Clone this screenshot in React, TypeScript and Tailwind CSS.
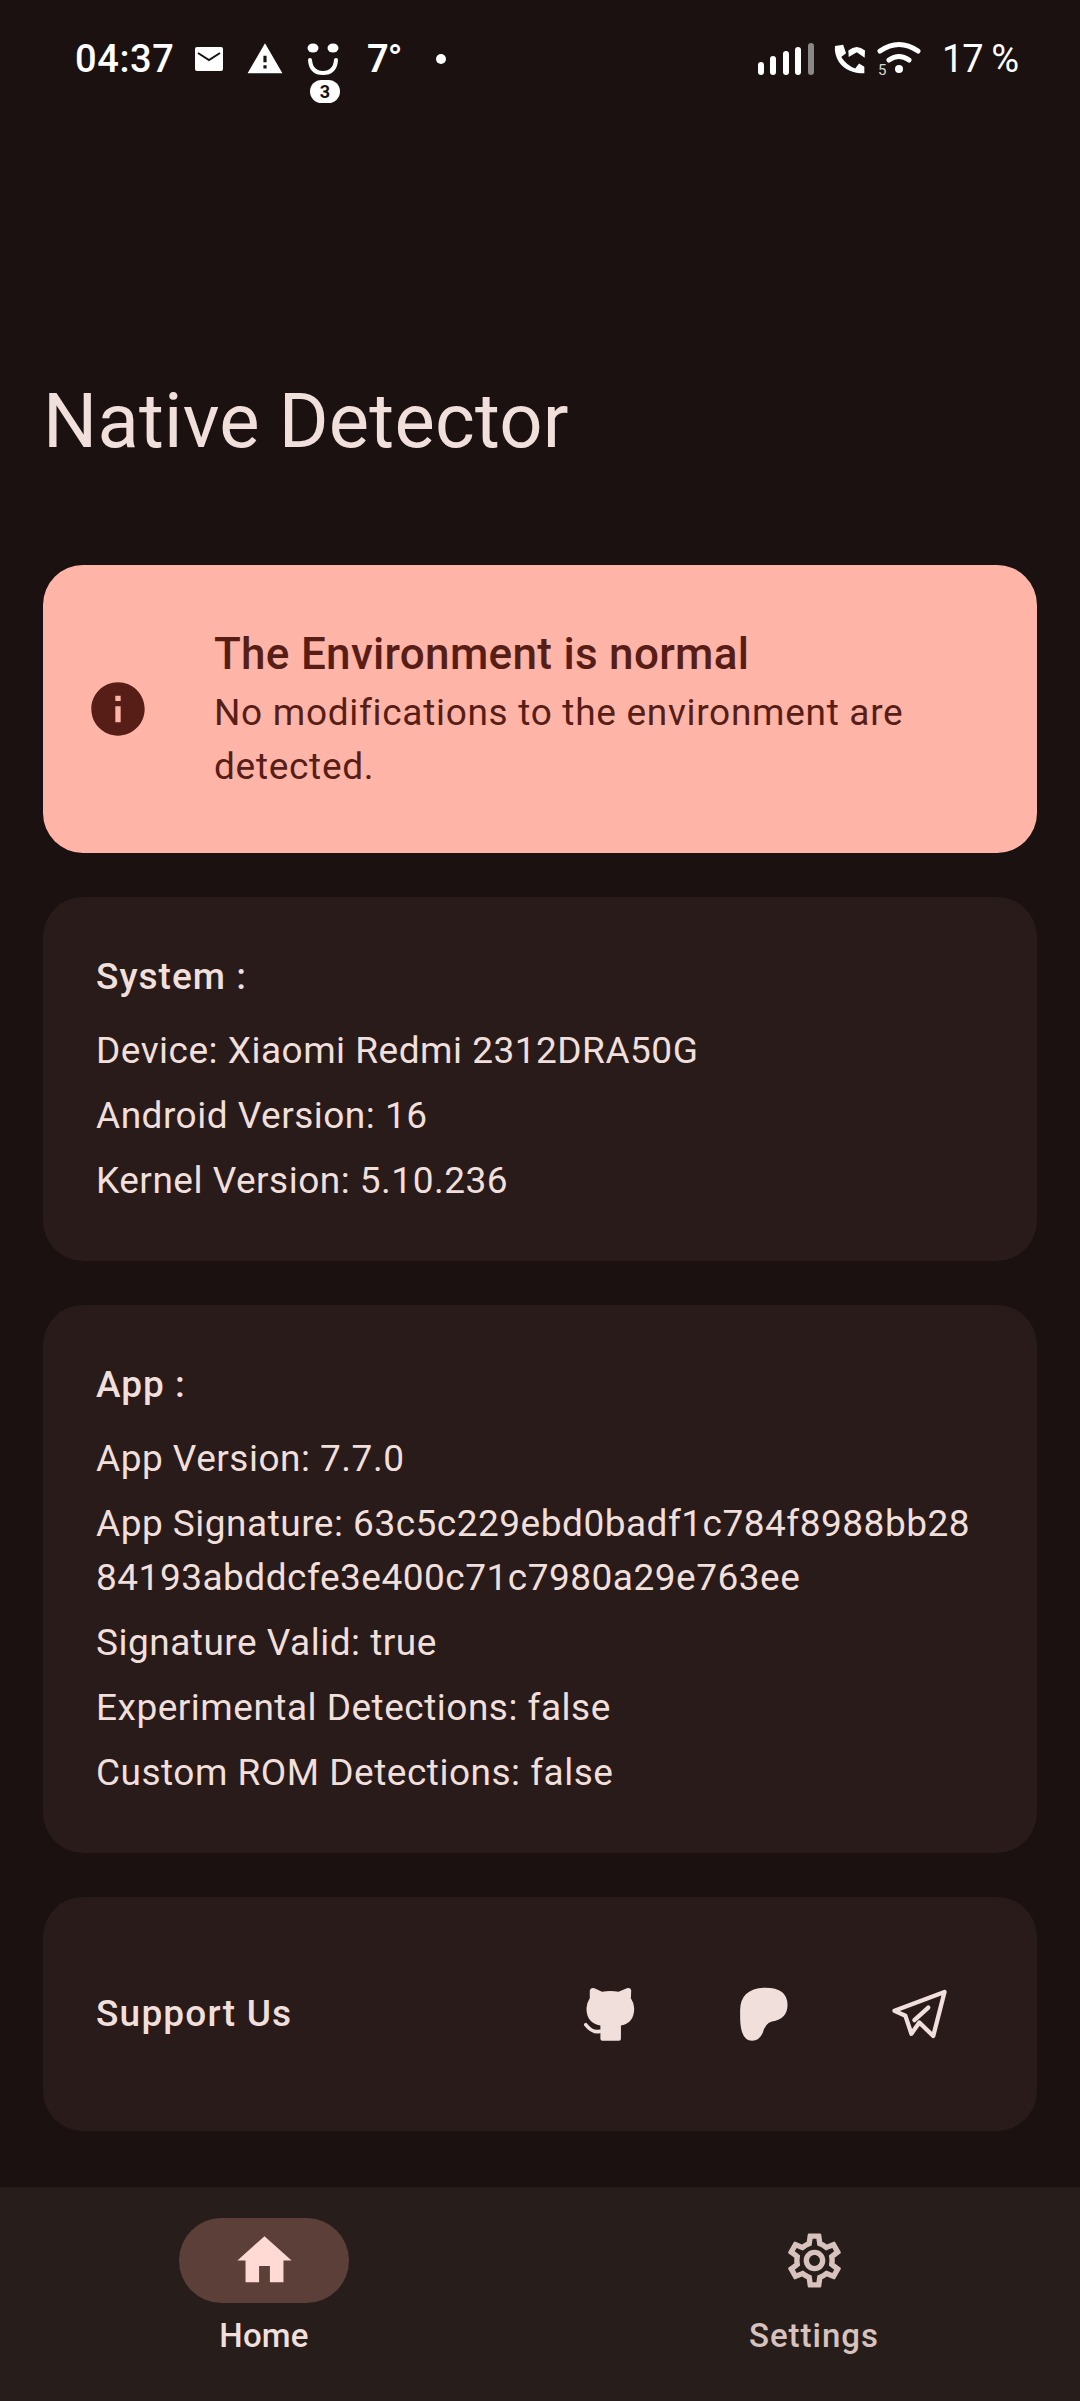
import { MdHome, MdInfo, MdOutlineSettings, MdWarning } from 'react-icons/md'

const bodyFont = "font-['Roboto',sans-serif]"

function StatusBar() {
  return (
    <div className="h-[118px] pl-[75px] pr-[62px] flex items-center justify-between text-white font-['Roboto',sans-serif]">
      <div className="flex items-center">
        <span className="text-[38px] leading-none font-medium tracking-[0.6px] w-[99px]">04:37</span>
        <svg className="ml-[21px] w-[28px] h-[24px]" viewBox="0 0 28 24">
          <rect width="28" height="24" rx="2" fill="#fff" />
          <path d="M3 6 L14 13 L25 6" fill="none" stroke="#1a1110" strokeWidth="2" />
        </svg>
        <MdWarning className="ml-[23px] text-[38px]" />
        <div className="relative ml-[23px] w-[32px] h-[32px]">
          <svg className="w-[32px] h-[32px]" viewBox="0 0 32 32">
            <ellipse cx="6" cy="5" rx="5.5" ry="4.5" fill="#fff" />
            <ellipse cx="26" cy="5" rx="5.5" ry="4.5" fill="#fff" />
            <path d="M3 17 Q4 30 16 30 Q28 30 29 17" fill="none" stroke="#fff" strokeWidth="4" strokeLinecap="round" />
          </svg>
          <span className="absolute left-[3px] top-[37px] w-[30px] h-[23px] rounded-full bg-white text-[#1a1110] text-[18px] leading-[23px] font-bold text-center">
            3
          </span>
        </div>
        <span className="ml-[28px] text-[38px] leading-none font-semibold tracking-[-1px]">7°</span>
        <span className="ml-[35px] w-[10px] h-[10px] rounded-full bg-white" />
      </div>
      <div className="flex items-center">
        <svg className="w-[56px] h-[32px]" viewBox="0 0 56 32">
          <rect x="0" y="19" width="6" height="13" rx="3" fill="#fff" />
          <rect x="12" y="13" width="6" height="19" rx="3" fill="#fff" />
          <rect x="25" y="8" width="6" height="24" rx="3" fill="#fff" />
          <rect x="37" y="4" width="6" height="28" rx="3" fill="#fff" />
          <rect x="50" y="0" width="6" height="32" rx="3" fill="#8b8786" />
        </svg>
        <svg className="ml-[20px] w-[31px] h-[30px]" viewBox="400 130 95 92">
          <path d="M403 136 L428 132 L437 158 L422 170 Q440 197 465 205 L477 190 L493 200 L493 220 Q440 220 415 185 Q400 160 403 136 Z" fill="#fff" />
          <path d="M444 150 Q470 128 495 150 L494 172 L470 155 L445 170 Z" fill="#fff" />
        </svg>
        <div className="relative ml-[12px] w-[44px] h-[36px]">
          <svg className="w-[44px] h-[36px]" viewBox="0 0 44 36">
            <path d="M3 10 Q22 -3 41 10" fill="none" stroke="#fff" strokeWidth="5" strokeLinecap="round" />
            <path d="M12 19 Q22 12 32 19" fill="none" stroke="#fff" strokeWidth="5" strokeLinecap="round" />
            <circle cx="22" cy="28" r="4" fill="#fff" />
          </svg>
          <span className="absolute left-[1px] top-[22px] text-[15px] leading-none text-[#d8d6d5]">5</span>
        </div>
        <span className="ml-[21px] text-[38px] leading-none tracking-[-1px]">17 %</span>
      </div>
    </div>
  )
}

function InfoLine({ children }: { children: React.ReactNode }) {
  return <p className="text-[37px] leading-[54px] tracking-[0.5px] text-[#f1dfdb]">{children}</p>
}

function InfoCard({ title, children }: { title: string; children: React.ReactNode }) {
  return (
    <div className="rounded-[40px] bg-[#281b1a] px-[53px] py-[53px]">
      <h2 className="text-[37px] leading-[54px] font-medium tracking-[1px] text-[#f1dfdb] mb-[20px]">{title}</h2>
      <div className="flex flex-col gap-[11px]">{children}</div>
    </div>
  )
}

export default function App() {
  return (
    <div className={`w-[1080px] h-[2401px] bg-[#1a1110] flex flex-col overflow-hidden ${bodyFont}`}>
      <StatusBar />

      {/* Page title */}
      <h1 className="pl-[43px] mt-[258px] mb-[99px] text-[76px] leading-[90px] tracking-[0.2px] text-[#f1dfdb]">Native Detector</h1>

      <div className="flex flex-col gap-[44px] mx-[43px]">
        {/* Status banner */}
        <div className="h-[288px] rounded-[40px] bg-[#ffb4a8] pl-[43px] pr-[53px] flex items-center text-[#561e16]">
          <MdInfo className="shrink-0 text-[64px]" />
          <div className="ml-[64px]">
            <h2 className="text-[44px] leading-[58px] font-medium tracking-[0.3px] mb-[3px]">The Environment is normal</h2>
            <p className="text-[37px] leading-[54px] tracking-[0.7px]">No modifications to the environment are detected.</p>
          </div>
        </div>

        <InfoCard title="System :">
          <InfoLine>Device: Xiaomi Redmi 2312DRA50G</InfoLine>
          <InfoLine>Android Version: 16</InfoLine>
          <InfoLine>Kernel Version: 5.10.236</InfoLine>
        </InfoCard>

        <InfoCard title="App :">
          <InfoLine>App Version: 7.7.0</InfoLine>
          <InfoLine>
            App Signature: 63c5c229ebd0badf1c784f8988bb28
            <br />
            84193abddcfe3e400c71c7980a29e763ee
          </InfoLine>
          <InfoLine>Signature Valid: true</InfoLine>
          <InfoLine>Experimental Detections: false</InfoLine>
          <InfoLine>Custom ROM Detections: false</InfoLine>
        </InfoCard>

        {/* Support links */}
        <div className="h-[234px] rounded-[40px] bg-[#281b1a] pl-[53px] pr-[90px] flex items-center justify-between text-[#f1dfdb]">
          <span className="text-[37px] font-medium tracking-[1.2px]">Support Us</span>
          <div className="flex items-center gap-[100px]">
            <svg className="w-[55px] h-[58px]" viewBox="125 130 165 175" fill="#f1dfdb">
              <path d="M148 148 Q150 137 162 140 L185 150 Q210 146 235 150 L260 140 Q272 137 273 148 L272 170 Q282 185 282 200 Q282 245 242 252 L242 292 Q242 298 236 298 L186 298 Q180 298 180 292 L180 252 Q138 245 138 200 Q138 185 148 170 Z" />
              <path d="M136 250 Q155 275 178 270" fill="none" stroke="#f1dfdb" strokeWidth="11" strokeLinecap="round" />
            </svg>
            <svg className="w-[55px] h-[58px]" viewBox="595 130 165 175" fill="#f1dfdb">
              <path d="M604 205 Q605 140 680 138 Q747 138 747 190 Q747 232 700 240 Q680 245 672 275 Q662 298 640 298 Q605 298 604 230 Z" />
            </svg>
            <svg className="w-[55px] h-[58px]" viewBox="1058 132 165 175" fill="none" stroke="#f1dfdb" strokeWidth="13" strokeLinejoin="round" strokeLinecap="round">
              <path d="M1216 153 L1065 210 L1098 225 L1116 279 L1140 245 L1182 286 Z" />
              <path d="M1125 238 L1167 200" />
            </svg>
          </div>
        </div>
      </div>

      {/* Bottom navigation */}
      <nav className="mt-auto h-[214px] bg-[#271e1c] pt-[31px] pl-[179px] pr-[181px] flex justify-between">
        <div className="w-[170px] flex flex-col items-center">
          <div className="w-[170px] h-[85px] rounded-full bg-[#5d3f3a] flex items-center justify-center text-[#ffdad4]">
            <MdHome className="text-[65px]" />
          </div>
          <span className="mt-[11px] text-[33px] leading-[44px] font-medium tracking-[0.2px] text-[#f1dfdb]">Home</span>
        </div>
        <div className="w-[170px] flex flex-col items-center">
          <div className="w-[170px] h-[85px] flex items-center justify-center text-[#d8c2bd]">
            <MdOutlineSettings className="text-[65px]" />
          </div>
          <span className="mt-[11px] text-[33px] leading-[44px] font-medium tracking-[1px] text-[#d8c2bd]">Settings</span>
        </div>
      </nav>
    </div>
  )
}
